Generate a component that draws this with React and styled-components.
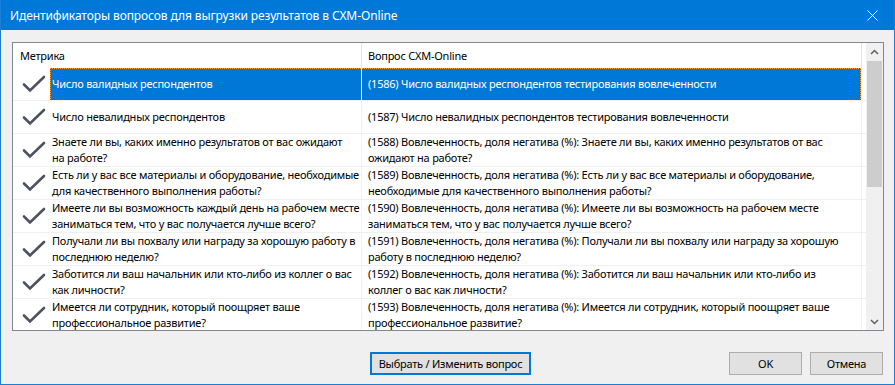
import React from "react";
import styled, { createGlobalStyle } from "styled-components";

const Global = createGlobalStyle`
  html, body { margin: 0; padding: 0; background: #ffffff; }
  * { box-sizing: border-box; }
`;

const FONT = `"Noto Sans", "Open Sans", "Liberation Sans", sans-serif`;

const Window = styled.div`
  width: 895px;
  height: 385px;
  border: 1px solid #1a7fd4;
  border-top: none;
  display: flex;
  flex-direction: column;
  background: #f0f0f0;
  font-family: ${FONT};
  overflow: hidden;
`;

const TitleBar = styled.div`
  height: 30px;
  flex: none;
  background: #0078d7;
  display: flex;
  align-items: center;
  justify-content: space-between;
  padding: 0 0 0 9px;
  color: #ffffff;
`;

const TitleText = styled.span`
  font-size: 12px;
  letter-spacing: -0.1px;
  white-space: nowrap;
`;

const CloseBtn = styled.div`
  width: 46px;
  height: 30px;
  display: flex;
  align-items: center;
  justify-content: center;
  margin-right: -1px;
`;

const Body = styled.div`
  flex: 1;
  display: flex;
  flex-direction: column;
  padding: 12px 10px 0 11px;
`;

const ListBox = styled.div`
  height: 289px;
  flex: none;
  border: 1px solid #828790;
  background: #ffffff;
  display: flex;
  overflow: hidden;
`;

const ListContent = styled.div`
  flex: 1;
  overflow: hidden;
  display: flex;
  flex-direction: column;
`;

const Grid = styled.div`
  display: grid;
  grid-template-columns: 37px 312px 500px 1fr;
`;

const HeaderCell = styled.div`
  height: 25px;
  display: flex;
  align-items: center;
  font-size: 11px;
  letter-spacing: -0.23px;
  color: #000;
  padding-left: ${(p) => p.$pad || 0}px;
  border-right: ${(p) => (p.$divider ? "1px solid #e5e5e5" : "none")};
  grid-column: ${(p) => p.$span || "auto"};
  white-space: nowrap;
`;

const IconCell = styled.div`
  height: 33px;
  border-bottom: 1px solid #f0f0f0;
  display: flex;
  align-items: center;
  justify-content: center;
  padding-left: 4px;
  padding-bottom: 1px;
`;

const TextCell = styled.div`
  height: 33px;
  border-bottom: 1px solid #f0f0f0;
  border-right: 1px solid ${(p) => (p.$selected ? "#ffffff" : "#f0f0f0")};
  background: ${(p) => (p.$selected ? "#0078d7" : "transparent")};
  color: ${(p) => (p.$selected ? "#ffffff" : "#000000")};
  display: flex;
  flex-direction: column;
  justify-content: center;
  padding-left: ${(p) => p.$pad}px;
  padding-bottom: 1px;
  font-size: 11px;
  letter-spacing: -0.23px;
  line-height: 16px;
  white-space: nowrap;
  overflow: hidden;
  position: relative;
`;

const FocusTop = styled.div`
  position: absolute;
  left: 0;
  right: 0;
  top: 0;
  border-top: 1px dotted #f0a040;
`;

const FocusSide = styled.div`
  position: absolute;
  top: 0;
  bottom: 1px;
  ${(p) => (p.$side === "left" ? "left: 0;" : "right: 0;")}
  border-left: 1px dotted #f0a040;
`;

const Filler = styled.div`
  height: 33px;
  border-bottom: 1px solid #f0f0f0;
`;

const Scrollbar = styled.div`
  width: 17px;
  flex: none;
  background: #f0f0f0;
  display: flex;
  flex-direction: column;
`;

const ArrowBox = styled.div`
  height: 17px;
  flex: none;
  display: flex;
  align-items: center;
  justify-content: center;
`;

const Track = styled.div`
  flex: 1;
  display: flex;
  flex-direction: column;
  padding: 1px 1px 0 1px;
`;

const Thumb = styled.div`
  height: 126px;
  background: #cdcdcd;
`;

const Footer = styled.div`
  flex: 1;
  display: flex;
  align-items: flex-start;
  padding: 21px 0 0 358px;
`;

const Button = styled.button`
  height: 23px;
  width: ${(p) => p.$w}px;
  margin-left: ${(p) => p.$ml || 0}px;
  background: #e1e1e1;
  border: ${(p) => (p.$primary ? "2px solid #0078d7" : "1px solid #adadad")};
  font-family: ${FONT};
  font-size: 11px;
  letter-spacing: -0.23px;
  color: #000;
  padding: 0;
  cursor: default;
  white-space: nowrap;
`;

const Check = () => (
  <svg width="24" height="18" viewBox="0 0 24 18">
    <path
      d="M2 9.5 L8 15.5 L22 2"
      fill="none"
      stroke="#4b5360"
      strokeWidth="2.6"
      strokeLinecap="round"
      strokeLinejoin="miter"
    />
  </svg>
);

const Chevron = ({ up }) => (
  <svg width="9" height="6" viewBox="0 0 9 6">
    <path
      d={up ? "M1 5 L4.5 1.5 L8 5" : "M1 1 L4.5 4.5 L8 1"}
      fill="none"
      stroke="#606060"
      strokeWidth="1.5"
    />
  </svg>
);

const rows = [
  {
    m: ["Число валидных респондентов"],
    q: ["(1586) Число валидных респондентов тестирования вовлеченности"],
    selected: true,
  },
  {
    m: ["Число невалидных респондентов"],
    q: ["(1587) Число невалидных респондентов тестирования вовлеченности"],
  },
  {
    m: ["Знаете ли вы, каких именно результатов от вас ожидают", "на работе?"],
    q: [
      "(1588) Вовлеченность, доля негатива (%): Знаете ли вы, каких именно результатов от вас",
      "ожидают на работе?",
    ],
  },
  {
    m: ["Есть ли у вас все материалы и оборудование, необходимые", "для качественного выполнения работы?"],
    q: [
      "(1589) Вовлеченность, доля негатива (%): Есть ли у вас все материалы и оборудование,",
      "необходимые для качественного выполнения работы?",
    ],
  },
  {
    m: ["Имеете ли вы возможность каждый день на рабочем месте", "заниматься тем, что у вас получается лучше всего?"],
    q: [
      "(1590) Вовлеченность, доля негатива (%): Имеете ли вы возможность на рабочем месте",
      "заниматься тем, что у вас получается лучше всего?",
    ],
  },
  {
    m: ["Получали ли вы похвалу или награду за хорошую работу в", "последнюю неделю?"],
    q: [
      "(1591) Вовлеченность, доля негатива (%): Получали ли вы похвалу или награду за хорошую",
      "работу в последнюю неделю?",
    ],
  },
  {
    m: ["Заботится ли ваш начальник или кто-либо из коллег о вас", "как личности?"],
    q: [
      "(1592) Вовлеченность, доля негатива (%): Заботится ли ваш начальник или кто-либо из",
      "коллег о вас как личности?",
    ],
  },
  {
    m: ["Имеется ли сотрудник, который поощряет ваше", "профессиональное развитие?"],
    q: [
      "(1593) Вовлеченность, доля негатива (%): Имеется ли сотрудник, который поощряет ваше",
      "профессиональное развитие?",
    ],
  },
];

const Lines = ({ lines }) => lines.map((l, i) => <div key={i}>{l}</div>);

export default function App() {
  return (
    <>
      <Global />
      <Window>
        <TitleBar>
          <TitleText>Идентификаторы вопросов для выгрузки результатов в CXM-Online</TitleText>
          <CloseBtn>
            <svg width="11" height="11" viewBox="0 0 11 11">
              <path d="M0.5 0.5 L10.5 10.5 M10.5 0.5 L0.5 10.5" stroke="#fff" strokeWidth="1" />
            </svg>
          </CloseBtn>
        </TitleBar>
        <Body>
          <ListBox>
            <ListContent>
              <Grid>
                <HeaderCell $span="1 / 3" $pad={7} $divider>
                  Метрика
                </HeaderCell>
                <HeaderCell $pad={6} $divider>
                  Вопрос CXM-Online
                </HeaderCell>
                <HeaderCell />
                {rows.map((r, i) => (
                  <React.Fragment key={i}>
                    <IconCell>
                      <Check />
                    </IconCell>
                    <TextCell $pad={2} $selected={r.selected}>
                      {r.selected && <FocusTop />}
                      {r.selected && <FocusSide $side="left" />}
                      <Lines lines={r.m} />
                    </TextCell>
                    <TextCell $pad={6} $selected={r.selected}>
                      {r.selected && <FocusTop />}
                      {r.selected && <FocusSide $side="right" />}
                      <Lines lines={r.q} />
                    </TextCell>
                    <Filler />
                  </React.Fragment>
                ))}
              </Grid>
            </ListContent>
            <Scrollbar>
              <ArrowBox>
                <Chevron up />
              </ArrowBox>
              <Track>
                <Thumb />
              </Track>
              <ArrowBox>
                <Chevron />
              </ArrowBox>
            </Scrollbar>
          </ListBox>
          <Footer>
            <Button $primary $w={161}>Выбрать / Изменить вопрос</Button>
            <Button $w={73} $ml={198}>OK</Button>
            <Button $w={73} $ml={8}>Отмена</Button>
          </Footer>
        </Body>
      </Window>
    </>
  );
}
